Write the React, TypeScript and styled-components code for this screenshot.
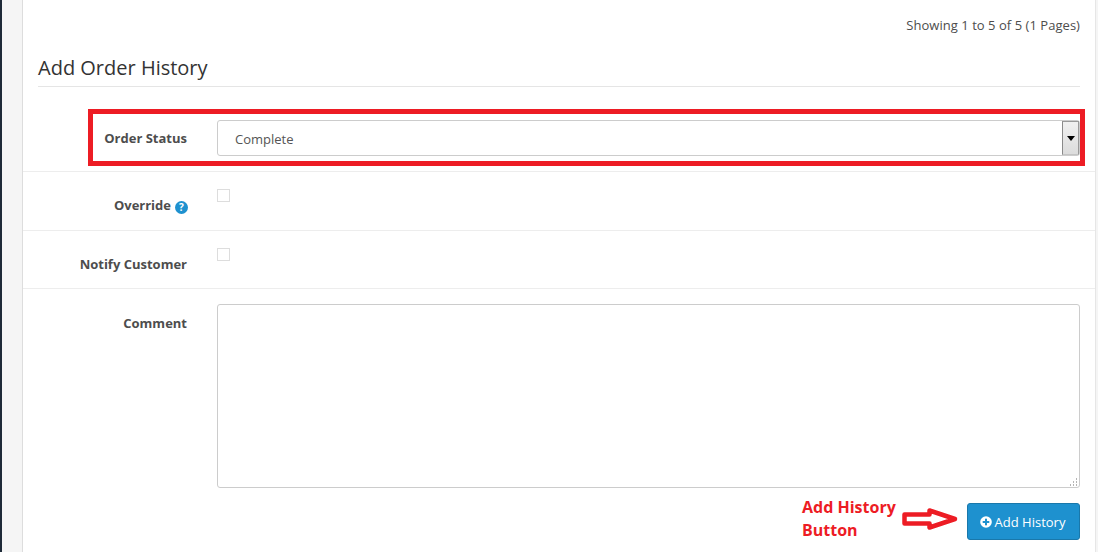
import React from "react";
import styled, { createGlobalStyle } from "styled-components";

const Global = createGlobalStyle`
  html, body { margin: 0; padding: 0; background: #f5f5f5; }
  body { font-family: "Open Sans", "Liberation Sans", sans-serif; color: #4d4d4d; overflow: hidden; }
  * { box-sizing: border-box; }
`;

const Page = styled.div`
  position: relative;
  display: flex;
  width: 1098px;
  height: 552px;
  overflow: hidden;
  background: #f5f5f5;
`;
const Sidebar = styled.div`
  width: 2px;
  background: #1e2a38;
`;
const Gutter = styled.div`
  width: 20px;
`;
const Panel = styled.main`
  width: 1074px;
  height: 552px;
  background: #fff;
  border-left: 1px solid #ddd;
  border-right: 1px solid #e6e6e6;
`;
const Pagination = styled.div`
  height: 46px;
  padding: 16px 15px 0 0;
  text-align: right;
  font-size: 13px;
  line-height: 18px;
  letter-spacing: 0.003em;
  color: #4d4d4d;
`;
const Heading = styled.h2`
  margin: 0 15px;
  height: 41px;
  padding-top: 8px;
  font-size: 20px;
  line-height: 27px;
  font-weight: 400;
  color: #333;
  border-bottom: 1px solid #e5e5e5;
`;
const Row = styled.div<{ $h?: number; $top: number }>`
  display: grid;
  grid-template-columns: 164px 1fr;
  column-gap: 30px;
  height: ${(p) => (p.$h ? `${p.$h}px` : "auto")};
  padding: ${(p) => p.$top}px 15px 0 0;
  border-bottom: ${(p) => (p.$h ? "1px solid #ededed" : "none")};
`;
const Label = styled.label<{ $offset: number }>`
  display: block;
  text-align: right;
  font-size: 13px;
  font-weight: 700;
  line-height: 18px;
  padding-top: ${(p) => p.$offset}px;
  color: #4d4d4d;
`;
const SelectWrap = styled.div`
  position: relative;
  height: 36px;
`;
const Select = styled.select`
  appearance: none;
  display: block;
  width: 100%;
  height: 36px;
  padding: 1px 17px 0;
  font: 13px "Open Sans", sans-serif;
  color: #555;
  background: #fff;
  border: 1px solid #ccc;
  border-radius: 3px;
`;
const Dropdown = styled.span`
  position: absolute;
  right: 1px;
  top: 1px;
  width: 17px;
  height: 34px;
  display: flex;
  align-items: center;
  justify-content: center;
  background: linear-gradient(#f0f0f0, #dcdcdc);
  border: 1px solid #999;
  border-left-color: #8a8a8a;
  border-bottom-color: #c4c4c4;
`;
const Caret = styled.span`
  width: 0;
  height: 0;
  margin-top: 1px;
  border-left: 4px solid transparent;
  border-right: 4px solid transparent;
  border-top: 5px solid #000;
`;
const Check = styled.input`
  appearance: none;
  display: block;
  width: 13px;
  height: 13px;
  margin: 0;
  background: #fff;
  border: 1px solid #ddd;
`;
const Help = styled.span`
  display: inline-flex;
  align-items: center;
  justify-content: center;
  width: 13px;
  height: 13px;
  margin: 0 -1px 0 4px;
  border-radius: 50%;
  background: #1e91cf;
  color: #fff;
  font-size: 10px;
  line-height: 13px;
  font-weight: 700;
  vertical-align: -1px;
`;
const CommentWrap = styled.div`
  position: relative;
  height: 184px;
`;
const Comment = styled.textarea`
  display: block;
  width: 100%;
  height: 184px;
  padding: 8px 13px;
  background: #fff;
  border: 1px solid #ccc;
  border-radius: 3px;
  outline: none;
  resize: none;
`;
const Grip = styled.svg`
  position: absolute;
  right: 2px;
  bottom: 2px;
  pointer-events: none;
`;
const Actions = styled.div`
  display: flex;
  justify-content: flex-end;
  padding: 15px 15px 0 0;
`;
const Button = styled.button`
  display: inline-flex;
  align-items: center;
  justify-content: center;
  gap: 3px;
  width: 113px;
  height: 37px;
  padding: 0 2px 0 0;
  font: 13px "Open Sans", sans-serif;
  color: #fff;
  background: #1e91cf;
  border: 1px solid #1978ab;
  border-radius: 3px;
`;
const Highlight = styled.div`
  position: absolute;
  left: 88px;
  top: 109px;
  width: 997px;
  height: 57px;
  border: 5px solid #ed1c24;
  pointer-events: none;
`;
const Note = styled.div`
  position: absolute;
  left: 802px;
  top: 496px;
  font-size: 16px;
  line-height: 23px;
  font-weight: 700;
  color: #ed1c24;
`;
const Arrow = styled.svg`
  position: absolute;
  left: 902px;
  top: 507px;
`;

const gripDots = [
  [7, 0], [7, 3], [4, 3], [7, 6], [4, 6], [1, 6],
];

export default function App() {
  return (
    <Page>
      <Global />
      <Sidebar />
      <Gutter />
      <Panel>
        <Pagination>Showing 1 to 5 of 5 (1 Pages)</Pagination>
        <Heading>Add Order History</Heading>
        <Row $h={85} $top={33}>
          <Label $offset={9}>Order Status</Label>
          <SelectWrap>
            <Select defaultValue="Complete">
              <option>Complete</option>
            </Select>
            <Dropdown><Caret /></Dropdown>
          </SelectWrap>
        </Row>
        <Row $h={59} $top={17}>
          <Label $offset={7}>Override<Help>?</Help></Label>
          <div><Check type="checkbox" /></div>
        </Row>
        <Row $h={58} $top={17}>
          <Label $offset={7}>Notify Customer</Label>
          <div><Check type="checkbox" /></div>
        </Row>
        <Row $top={15}>
          <Label $offset={10}>Comment</Label>
          <CommentWrap>
            <Comment />
            <Grip width="9" height="8" viewBox="0 0 9 8">
              {gripDots.map(([x, y]) => (
                <rect key={`${x}-${y}`} x={x} y={y} width="1" height="2" fill="#b5b5b5" />
              ))}
            </Grip>
          </CommentWrap>
        </Row>
        <Actions>
          <Button>
            <svg width="12" height="12" viewBox="0 0 12 12">
              <circle cx="6" cy="6" r="5.8" fill="#fff" />
              <rect x="2.7" y="5" width="6.6" height="2" fill="#1e91cf" />
              <rect x="5" y="2.7" width="2" height="6.6" fill="#1e91cf" />
            </svg>
            Add History
          </Button>
        </Actions>
      </Panel>
      <Highlight />
      <Note>Add History<br />Button</Note>
      <Arrow width="58" height="24" viewBox="0 0 58 24">
        <path d="M2.5 7.5H27.5V3.5L53 12L27.5 20.5V16.5H2.5Z" fill="#fff" stroke="#ed1c24" strokeWidth="4.5" strokeLinejoin="round" />
      </Arrow>
    </Page>
  );
}
